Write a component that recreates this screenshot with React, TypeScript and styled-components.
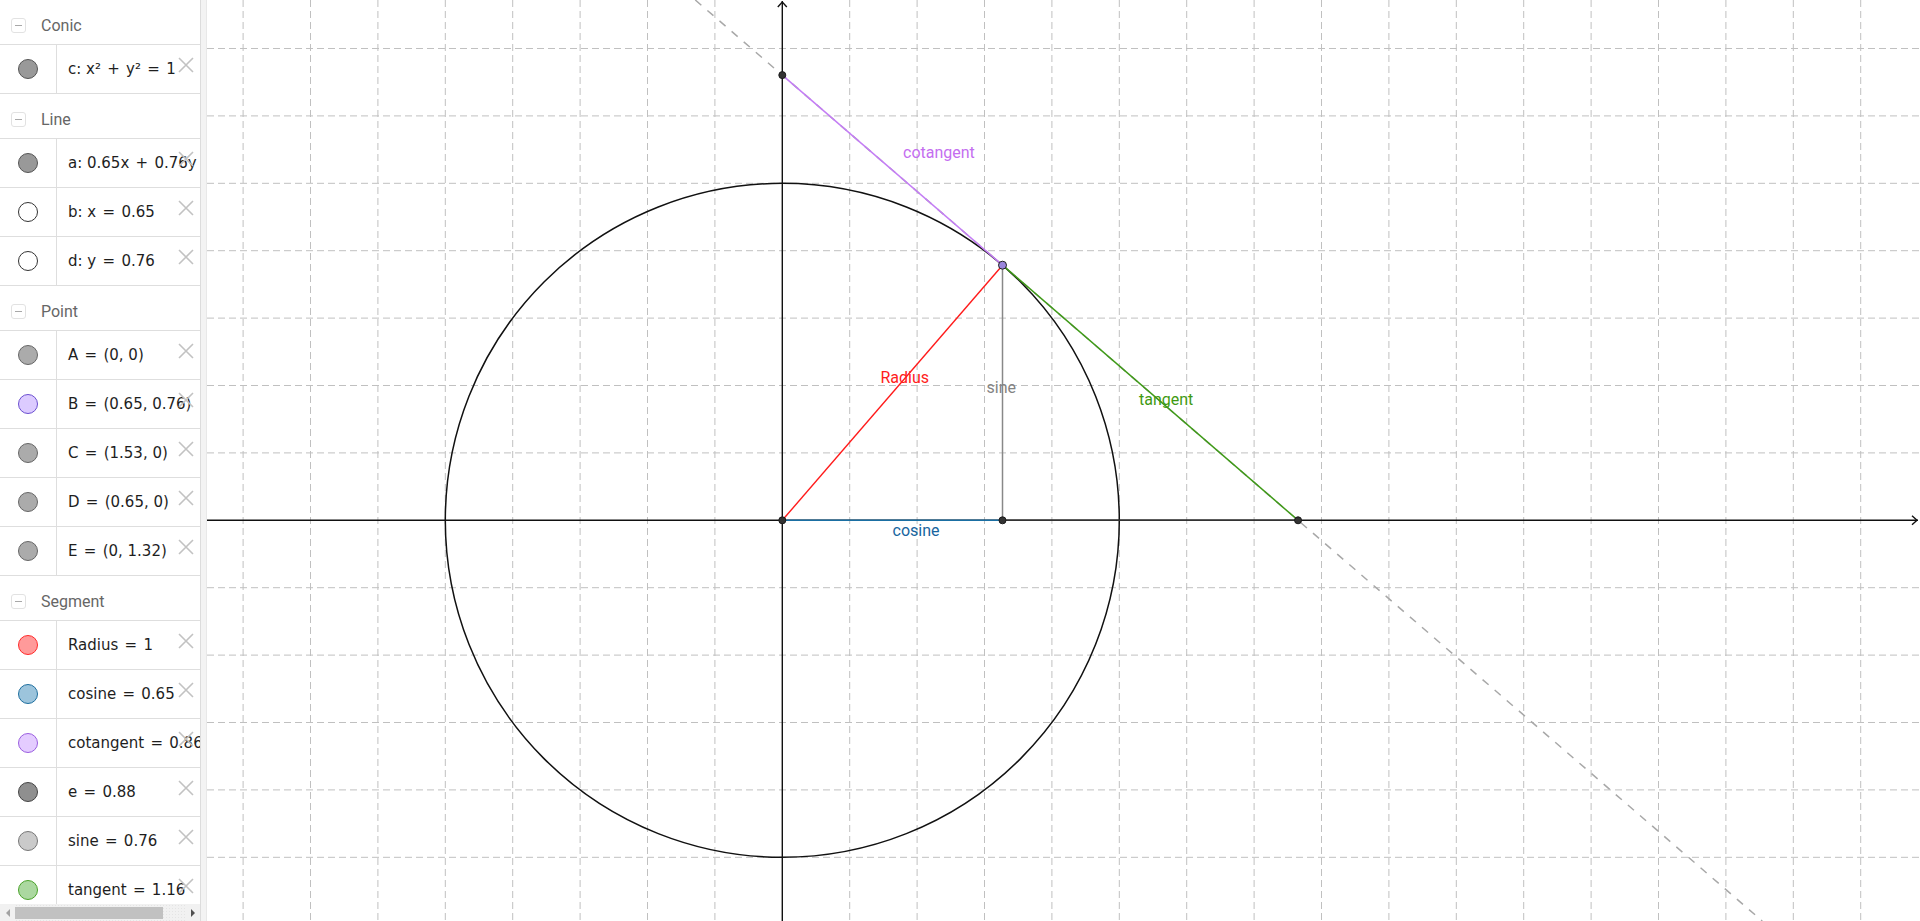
import React from 'react';
import styled, { createGlobalStyle } from 'styled-components';

const GlobalStyle = createGlobalStyle`
  html, body {
    margin: 0;
    padding: 0;
    height: 921px;
    overflow: hidden;
    background: #ffffff;
  }
  #root {
    height: 921px;
  }
`;

const Page = styled.div`
  display: flex;
  width: 1920px;
  height: 921px;
  overflow: hidden;
`;

const Sidebar = styled.aside`
  width: 200px;
  flex: 0 0 200px;
  display: flex;
  flex-direction: column;
  background: #fff;
`;

const List = styled.div`
  flex: 1;
  overflow: hidden;
`;

const GroupHeader = styled.div`
  height: 44px;
  box-sizing: border-box;
  padding-top: 7px;
  display: flex;
  align-items: center;
`;

const ToggleBox = styled.div`
  width: 15px;
  height: 15px;
  box-sizing: border-box;
  margin-left: 11px;
  border: 1px solid #e2e2e2;
  border-radius: 3px;
  display: flex;
  align-items: center;
  justify-content: center;

  &::after {
    content: '';
    width: 7px;
    height: 1.5px;
    background: #a8a8a8;
  }
`;

const GroupTitle = styled.span`
  margin-left: 15px;
  font-family: Roboto, 'Liberation Sans', sans-serif;
  font-size: 16px;
  color: #666;
`;

const Items = styled.div`
  border-bottom: 1px solid #dedede;
`;

const ItemRow = styled.div`
  position: relative;
  display: flex;
  height: 48px;
  border-top: 1px solid #dedede;
`;

const AvatarCell = styled.div`
  width: 56px;
  flex: 0 0 56px;
  border-right: 1px solid #dedede;
  display: flex;
  align-items: center;
  justify-content: center;
`;

const Avatar = styled.div<{ $fill: string; $stroke: string }>`
  width: 20px;
  height: 20px;
  box-sizing: border-box;
  border-radius: 50%;
  background: ${({ $fill }) => $fill};
  border: 1px solid ${({ $stroke }) => $stroke};
`;

const ValueCell = styled.div`
  padding: 14px 0 0 11px;
  font-family: 'DejaVu Sans', 'Liberation Sans', sans-serif;
  font-size: 15px;
  line-height: 20px;
  color: #1e1e1e;
  white-space: nowrap;
`;

const Op = styled.span`
  margin: 0 1.5px;
`;

const DeleteIcon = styled.svg`
  position: absolute;
  right: 6px;
  top: 12px;
  width: 16px;
  height: 16px;
`;

const ScrollBar = styled.div`
  height: 17px;
  flex: 0 0 17px;
  display: flex;
  align-items: center;
  background: #f1f1f1;
`;

const ScrollArrow = styled.div<{ $dir: 'left' | 'right'; $color: string }>`
  width: 15px;
  height: 17px;
  display: flex;
  align-items: center;
  justify-content: center;

  &::after {
    content: '';
    width: 0;
    height: 0;
    border-top: 4px solid transparent;
    border-bottom: 4px solid transparent;
    ${({ $dir, $color }) =>
      $dir === 'left' ? `border-right: 4px solid ${$color};` : `border-left: 4px solid ${$color};`}
  }
`;

const ScrollTrack = styled.div`
  flex: 1;
  height: 17px;
  display: flex;
  align-items: center;
  background-image: radial-gradient(#e4e4e4 0.6px, transparent 0.7px);
  background-size: 3px 3px;
`;

const ScrollThumb = styled.div`
  width: 148px;
  height: 12px;
  background: #c1c1c1;
`;

const Splitter = styled.div`
  width: 7px;
  flex: 0 0 7px;
  box-sizing: border-box;
  background: #f3f3f3;
  border-left: 1px solid #dcdcdc;
  border-right: 1px solid #e8e8e8;
`;

const Canvas = styled.div`
  flex: 1;
  height: 921px;
  background: #fff;

  svg {
    display: block;
  }
`;

type Item = { label: string; fill: string; stroke: string };
type Group = { title: string; items: Item[] };

const groups: Group[] = [
  { title: 'Conic', items: [{ label: 'c: x² + y² = 1', fill: '#999999', stroke: '#555' }] },
  {
    title: 'Line',
    items: [
      { label: 'a: 0.65x + 0.76y = 1', fill: '#999999', stroke: '#555' },
      { label: 'b: x = 0.65', fill: '#ffffff', stroke: '#333' },
      { label: 'd: y = 0.76', fill: '#ffffff', stroke: '#333' },
    ],
  },
  {
    title: 'Point',
    items: [
      { label: 'A = (0, 0)', fill: '#ababab', stroke: '#666' },
      { label: 'B = (0.65, 0.76)', fill: '#dccbff', stroke: '#6b4fd0' },
      { label: 'C = (1.53, 0)', fill: '#ababab', stroke: '#666' },
      { label: 'D = (0.65, 0)', fill: '#ababab', stroke: '#666' },
      { label: 'E = (0, 1.32)', fill: '#ababab', stroke: '#666' },
    ],
  },
  {
    title: 'Segment',
    items: [
      { label: 'Radius = 1', fill: '#ff9a9a', stroke: '#ff2a2a' },
      { label: 'cosine = 0.65', fill: '#9cc4dc', stroke: '#1f6f9f' },
      { label: 'cotangent = 0.86', fill: '#e4ccff', stroke: '#9a5ee0' },
      { label: 'e = 0.88', fill: '#8f8f8f', stroke: '#444' },
      { label: 'sine = 0.76', fill: '#cacaca', stroke: '#777' },
      { label: 'tangent = 1.16', fill: '#abd8a0', stroke: '#4aa32a' },
    ],
  },
];

// operators get a little extra room, like typeset math
const MathText: React.FC<{ text: string }> = ({ text }) => (
  <>
    {text.split(/ ([=+]) /).map((part, i) =>
      i % 2 === 1 ? <Op key={i}> {part} </Op> : <React.Fragment key={i}>{part}</React.Fragment>
    )}
  </>
);

// graphics geometry (canvas px)
const W = 1713;
const H = 921;
const U = 337;
const STEP = U / 5;
const OX = 575.3;
const OY = 520.3;
const px = (x: number) => OX + x * U;
const py = (y: number) => OY - y * U;

const theta = (49.2 * Math.PI) / 180;
const cosT = Math.cos(theta);
const sinT = Math.sin(theta);
const A = { x: px(0), y: py(0) };
const B = { x: px(cosT), y: py(sinT) };
const C = { x: px(1 / cosT), y: py(0) };
const D = { x: px(cosT), y: py(0) };
const E = { x: px(0), y: py(1 / sinT) };

const vLines: number[] = [];
for (let k = -10; k <= 20; k++) {
  const x = OX + k * STEP;
  if (k !== 0 && x > 0 && x < W) vLines.push(x);
}
const hLines: number[] = [];
for (let k = -10; k <= 10; k++) {
  const y = OY - k * STEP;
  if (k !== 0 && y > 0 && y < H) hLines.push(y);
}

// line a through E and C, extended to the canvas edges
const dx = C.x - E.x;
const dy = C.y - E.y;
const t0 = -E.y / dy;
const t1 = (H - E.y) / dy;
const lineA = {
  x1: E.x + dx * t0,
  y1: 0,
  x2: E.x + dx * t1,
  y2: H,
};

const Graphics: React.FC = () => (
  <svg width={W} height={H}>
    <g stroke="#c0c0c0" strokeWidth={1} strokeDasharray="7 4">
      {vLines.map((x) => (
        <line key={`v${x}`} x1={x} y1={0} x2={x} y2={H} />
      ))}
      {hLines.map((y) => (
        <line key={`h${y}`} x1={0} y1={y} x2={W} y2={y} />
      ))}
    </g>

    {/* axes */}
    <g stroke="#111" strokeWidth={1.4} fill="none">
      <line x1={0} y1={OY} x2={W - 2} y2={OY} />
      <line x1={OX} y1={H} x2={OX} y2={1} />
      <polyline points={`${W - 8},${OY - 4.5} ${W - 3},${OY} ${W - 8},${OY + 4.5}`} />
      <polyline points={`${OX - 4.5},${7} ${OX},${2} ${OX + 4.5},${7}`} />
    </g>

    {/* line a */}
    <line
      x1={lineA.x1}
      y1={lineA.y1}
      x2={lineA.x2}
      y2={lineA.y2}
      stroke="#a8a8a8"
      strokeWidth={1.5}
      strokeDasharray="8 8"
    />

    {/* unit circle */}
    <circle cx={OX} cy={OY} r={U} fill="none" stroke="#111" strokeWidth={1.5} />

    {/* segments */}
    <line x1={D.x} y1={D.y} x2={C.x} y2={C.y} stroke="#333" strokeWidth={1.5} />
    <line x1={A.x} y1={A.y} x2={D.x} y2={D.y} stroke="#1a6fa3" strokeWidth={1.6} />
    <line x1={D.x} y1={D.y} x2={B.x} y2={B.y} stroke="#888" strokeWidth={1.5} />
    <line x1={A.x} y1={A.y} x2={B.x} y2={B.y} stroke="#ff1a1a" strokeWidth={1.4} />
    <line x1={E.x} y1={E.y} x2={B.x} y2={B.y} stroke="#c47df5" strokeWidth={1.5} />
    <line x1={B.x} y1={B.y} x2={C.x} y2={C.y} stroke="#3f9a18" strokeWidth={1.5} />

    {/* labels */}
    <g fontFamily="Roboto, 'Liberation Sans', sans-serif" fontSize={16}>
      <text x={696} y={158} fill="#c46ef0">cotangent</text>
      <text x={673.5} y={382.5} fill="#ff2020">Radius</text>
      <text x={779.5} y={393} fill="#838383">sine</text>
      <text x={932} y={404.5} fill="#3f9a12">tangent</text>
      <text x={685.5} y={536} fill="#1765a0">cosine</text>
    </g>

    {/* points */}
    <g fill="#333" stroke="#1a1a1a" strokeWidth={1}>
      <circle cx={A.x} cy={A.y} r={3.5} />
      <circle cx={D.x} cy={D.y} r={3.5} />
      <circle cx={C.x} cy={C.y} r={3.5} />
      <circle cx={E.x} cy={E.y} r={3.5} />
    </g>
    <circle cx={B.x} cy={B.y} r={4} fill="#9a86dc" stroke="#222" strokeWidth={1} />
  </svg>
);

const App: React.FC = () => (
  <>
    <GlobalStyle />
    <Page>
      <Sidebar>
        <List>
          {groups.map((group) => (
            <div key={group.title}>
              <GroupHeader>
                <ToggleBox />
                <GroupTitle>{group.title}</GroupTitle>
              </GroupHeader>
              <Items>
                {group.items.map((item) => (
                  <ItemRow key={item.label}>
                    <AvatarCell>
                      <Avatar $fill={item.fill} $stroke={item.stroke} />
                    </AvatarCell>
                    <ValueCell>
                      <MathText text={item.label} />
                    </ValueCell>
                    <DeleteIcon viewBox="0 0 16 16">
                      <path d="M1 1 L15 15 M15 1 L1 15" stroke="#c2c2c2" strokeWidth={1.6} />
                    </DeleteIcon>
                  </ItemRow>
                ))}
              </Items>
            </div>
          ))}
        </List>
        <ScrollBar>
          <ScrollArrow $dir="left" $color="#a3a3a3" />
          <ScrollTrack>
            <ScrollThumb />
          </ScrollTrack>
          <ScrollArrow $dir="right" $color="#505050" />
        </ScrollBar>
      </Sidebar>
      <Splitter />
      <Canvas>
        <Graphics />
      </Canvas>
    </Page>
  </>
);

export default App;
